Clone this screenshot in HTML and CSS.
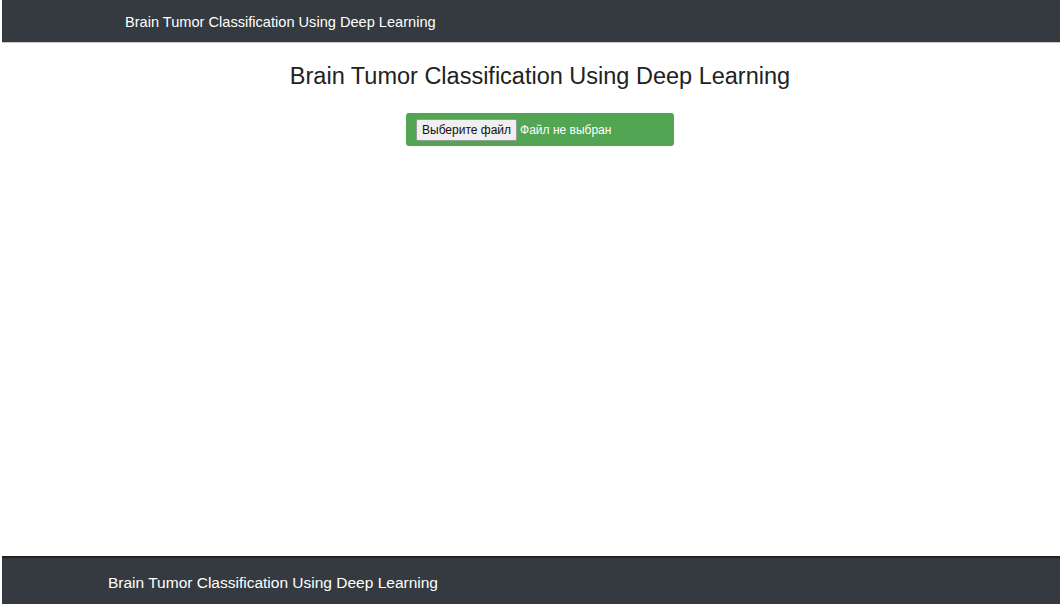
FILE: index.html
```html
<!DOCTYPE html>
<html lang="ru">
<head>
<meta charset="utf-8">
<title>Brain Tumor Classification Using Deep Learning</title>
<link rel="stylesheet" href="styles.css">
</head>
<body>
<div class="page">
  <header class="navbar">
    <span class="brand">Brain Tumor Classification Using Deep Learning</span>
  </header>
  <main class="content">
    <h2 class="title">Brain Tumor Classification Using Deep Learning</h2>
    <form class="upload">
      <label class="file-field">
        <span class="file-btn">Выберите файл</span>
        <span class="file-name">Файл не выбран</span>
      </label>
    </form>
  </main>
  <footer class="footer">
    <span class="footer-text">Brain Tumor Classification Using Deep Learning</span>
  </footer>
</div>
</body>
</html>
```
FILE: styles.css
```css
* { box-sizing: border-box; }
html, body { margin: 0; padding: 0; height: 100%; }
body {
  font-family: "Liberation Sans", Arial, sans-serif;
  color: #212529;
  background: #fff;
}
.page {
  height: 604px;
  display: flex;
  flex-direction: column;
  padding-left: 2px;
}
.navbar {
  height: 43px;
  background: #343a40;
  border-bottom: 1px solid #c8c9cb;
  display: flex;
  align-items: center;
  padding-left: 123px;
}
.brand {
  color: #fff;
  font-size: 14.6px;
  padding-top: 1px;
}
.content {
  flex: 1;
  display: flex;
  flex-direction: column;
  align-items: center;
  padding-left: 18px;
}
.title {
  margin: 19px 0 0;
  font-size: 23.5px;
  font-weight: 400;
  line-height: 29px;
  color: #222;
}
.upload { margin-top: 22px; }
.file-field {
  display: flex;
  align-items: center;
  width: 268px;
  height: 33px;
  background: #52a553;
  border-radius: 3px;
  padding-left: 10px;
  gap: 3px;
}
.file-btn {
  font-size: 12px;
  color: #111;
  background: #efefef;
  border: 1px solid #9a9a9a;
  border-radius: 2px;
  padding: 2px 5px;
  line-height: 16px;
}
.file-name {
  font-size: 12px;
  color: #fff;
}
.footer {
  height: 48px;
  background: #343a40;
  border-top: 2px solid #202326;
  display: flex;
  align-items: center;
  padding-left: 106px;
}
.footer-text {
  color: #fff;
  font-size: 15.5px;
  padding-top: 3px;
}
```
